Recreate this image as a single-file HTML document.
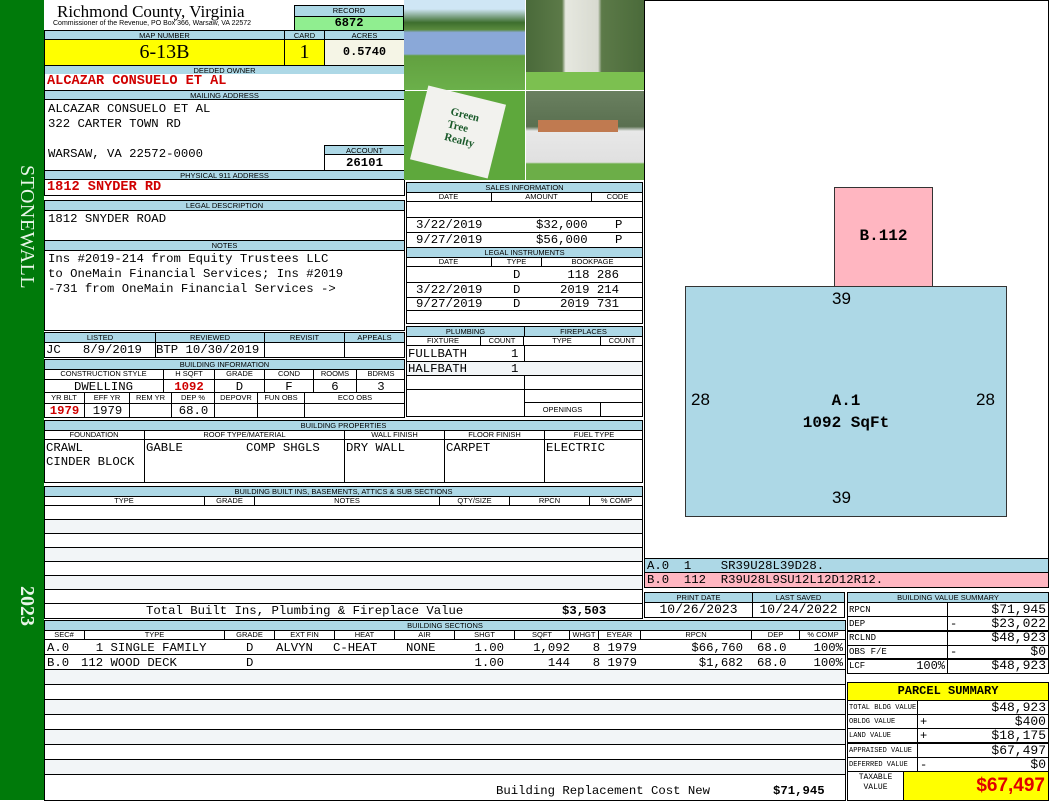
<!DOCTYPE html>
<html><head><meta charset="utf-8"><style>
*{margin:0;padding:0;box-sizing:border-box}
body{width:1050px;height:800px;position:relative;background:#fff;overflow:hidden;font-family:"Liberation Mono",monospace;font-size:12.3px;color:#000}
.a{position:absolute}
.h{position:absolute;background:#add8e6;border:1px solid #000;font:7.5px/9px "Liberation Sans",sans-serif;text-align:center;overflow:hidden;white-space:nowrap}
.b{position:absolute;border:1px solid #000;background:#fff;overflow:hidden;white-space:nowrap}
.m{font-family:"Liberation Mono",monospace;font-size:12.3px;line-height:14px}
.r{color:#d00000;font-weight:bold}
</style></head><body>
<div class="a" style="left:0;top:0;width:44px;height:800px;background:#007a0a"></div>
<div class="a" style="left:8px;top:165px;width:30px;height:160px;writing-mode:vertical-rl;font:20px 'Liberation Serif',serif;color:#e8f5e8;letter-spacing:0.5px">STONEWALL</div>
<div class="a" style="left:8px;top:586px;width:30px;height:45px;writing-mode:vertical-rl;font:bold 20px 'Liberation Serif',serif;color:#e8f5e8">2023</div>

<div class="a" style="left:57px;top:2px;font:17px/20px 'Liberation Serif',serif">Richmond County, Virginia</div>
<div class="a" style="left:53px;top:19px;font:7px/9px 'Liberation Sans',sans-serif">Commissioner of the Revenue, PO Box 366, Warsaw, VA 22572</div>
<div class="h" style="left:294px;top:5px;width:110px;height:12px;line-height:10px">RECORD</div>
<div class="b" style="left:294px;top:16px;width:110px;height:15px;background:#90ee90;text-align:center;font:bold 12px/13px 'Liberation Mono',monospace">6872</div>
<div class="h" style="left:44px;top:30px;width:241px;height:10px">MAP NUMBER</div>
<div class="h" style="left:284px;top:30px;width:41px;height:10px">CARD</div>
<div class="h" style="left:324px;top:30px;width:81px;height:10px">ACRES</div>
<div class="b" style="left:44px;top:39px;width:241px;height:27px;background:#ffff00;text-align:center;font:20px/25px 'Liberation Serif',serif">6-13B</div>
<div class="b" style="left:284px;top:39px;width:41px;height:27px;background:#ffff00;text-align:center;font:20px/25px 'Liberation Serif',serif">1</div>
<div class="b" style="left:324px;top:39px;width:81px;height:27px;background:#f5f5e6;text-align:center;font:bold 12px/25px 'Liberation Mono',monospace">0.5740</div>
<div class="h" style="left:44px;top:65px;width:361px;height:10px">DEEDED OWNER</div>
<div class="b m r" style="left:44px;top:74px;width:361px;height:17px;border-top:0;padding-left:2px;font-size:13.6px;line-height:16px">ALCAZAR CONSUELO ET AL</div>
<div class="h" style="left:44px;top:90px;width:361px;height:10px">MAILING ADDRESS</div>
<div class="b m" style="left:44px;top:99px;width:361px;height:72px;padding:2px 0 0 3px;line-height:15px">ALCAZAR CONSUELO ET AL<br>322 CARTER TOWN RD<br><br>WARSAW, VA 22572-0000</div>
<div class="h" style="left:324px;top:145px;width:81px;height:10px">ACCOUNT</div>
<div class="b m" style="left:324px;top:154px;width:81px;height:17px;text-align:center;font-weight:bold;line-height:16px">26101</div>
<div class="h" style="left:44px;top:170px;width:361px;height:10px">PHYSICAL 911 ADDRESS</div>
<div class="b m r" style="left:44px;top:179px;width:361px;height:17px;padding-left:2px;font-size:13.6px;line-height:16px">1812 SNYDER RD</div>

<div class="h" style="left:44px;top:200px;width:361px;height:11px">LEGAL DESCRIPTION</div>
<div class="b m" style="left:44px;top:210px;width:361px;height:31px;padding:1px 3px">1812 SNYDER ROAD</div>
<div class="h" style="left:44px;top:240px;width:361px;height:11px">NOTES</div>
<div class="b m" style="left:44px;top:250px;width:361px;height:81px;padding:1px 3px;line-height:15px">Ins #2019-214 from Equity Trustees LLC<br>to OneMain Financial Services; Ins #2019<br>-731 from OneMain Financial Services -&gt;</div>

<div class="h" style="left:44px;top:332px;width:112px;height:11px">LISTED</div>
<div class="h" style="left:155px;top:332px;width:110px;height:11px">REVIEWED</div>
<div class="h" style="left:264px;top:332px;width:81px;height:11px">REVISIT</div>
<div class="h" style="left:344px;top:332px;width:61px;height:11px">APPEALS</div>
<div class="b m" style="left:44px;top:342px;width:112px;height:16px;padding-left:1px">JC&nbsp;&nbsp;&nbsp;8/9/2019</div>
<div class="b m" style="left:155px;top:342px;width:110px;height:16px">BTP 10/30/2019</div>
<div class="b" style="left:264px;top:342px;width:81px;height:16px"></div>
<div class="b" style="left:344px;top:342px;width:61px;height:16px"></div>

<div class="h" style="left:44px;top:359px;width:361px;height:11px">BUILDING INFORMATION</div>
<div class="b" style="left:44px;top:369px;width:361px;height:49px"></div>
<div class="a" style="left:44px;top:369px;width:361px;font:7.5px/10px 'Liberation Sans',sans-serif">
<span class="a" style="left:0;width:120px;text-align:center;border-right:1px solid #000">CONSTRUCTION STYLE</span>
<span class="a" style="left:120px;width:51px;text-align:center;border-right:1px solid #000">H SQFT</span>
<span class="a" style="left:171px;width:50px;text-align:center;border-right:1px solid #000">GRADE</span>
<span class="a" style="left:221px;width:49px;text-align:center;border-right:1px solid #000">COND</span>
<span class="a" style="left:270px;width:43px;text-align:center;border-right:1px solid #000">ROOMS</span>
<span class="a" style="left:313px;width:48px;text-align:center">BDRMS</span></div>
<div class="a m" style="left:44px;top:379px;width:361px;height:14px;border-top:1px solid #000;border-bottom:1px solid #000">
<span class="a" style="left:0;width:120px;height:13px;text-align:center;border-right:1px solid #000">DWELLING</span>
<span class="a r" style="left:120px;width:51px;height:13px;text-align:center;border-right:1px solid #000">1092</span>
<span class="a" style="left:171px;width:50px;height:13px;text-align:center;border-right:1px solid #000">D</span>
<span class="a" style="left:221px;width:49px;height:13px;text-align:center;border-right:1px solid #000">F</span>
<span class="a" style="left:270px;width:43px;height:13px;text-align:center;border-right:1px solid #000">6</span>
<span class="a" style="left:313px;width:48px;text-align:center">3</span></div>
<div class="a" style="left:44px;top:393px;width:361px;font:7.5px/10px 'Liberation Sans',sans-serif">
<span class="a" style="left:0;width:41px;height:25px;text-align:center;border-right:1px solid #000">YR BLT</span>
<span class="a" style="left:41px;width:45px;height:25px;text-align:center;border-right:1px solid #000">EFF YR</span>
<span class="a" style="left:86px;width:42px;height:25px;text-align:center;border-right:1px solid #000">REM YR</span>
<span class="a" style="left:128px;width:43px;height:25px;text-align:center;border-right:1px solid #000">DEP %</span>
<span class="a" style="left:171px;width:43px;height:25px;text-align:center;border-right:1px solid #000">DEPOVR</span>
<span class="a" style="left:214px;width:47px;height:25px;text-align:center;border-right:1px solid #000">FUN OBS</span>
<span class="a" style="left:261px;width:100px;text-align:center">ECO OBS</span></div>
<div class="a m" style="left:44px;top:403px;width:361px;border-top:1px solid #000">
<span class="a r" style="left:0;width:41px;text-align:center">1979</span>
<span class="a" style="left:41px;width:45px;text-align:center">1979</span>
<span class="a" style="left:128px;width:43px;text-align:center">68.0</span></div>

<div class="a" style="left:404px;top:0;width:121px;height:90px;background:linear-gradient(#cfe6f5 0,#cfe6f5 10%,#3d6e2e 25%,#5a8a3e 33%,#8aa8d8 36%,#8aa8d8 60%,#62a040 62%,#6bb04a 100%)"></div>
<div class="a" style="left:526px;top:0;width:120px;height:90px;background:linear-gradient(90deg,#4a6a3a 0,#5c7a48 30%,#e6e8e0 33%,#d8dad0 60%,#5c7a48 63%,#4a6a3a 100%)"></div>
<div class="a" style="left:526px;top:72px;width:120px;height:18px;background:#7cc050"></div>
<div class="a" style="left:404px;top:91px;width:121px;height:89px;background:#5ea83c"></div>
<div class="a" style="left:418px;top:94px;width:80px;height:76px;background:#f2f2ee;transform:rotate(14deg);color:#1a5a2a;font:bold 11px/13px 'Liberation Serif',serif;padding:14px 0 0 28px">Green<br>Tree<br>Realty</div>
<div class="a" style="left:526px;top:91px;width:120px;height:89px;background:linear-gradient(#6a8060 0,#5a7050 40%,#e8e8e8 45%,#e0e0e0 80%,#6cae48 82%,#6cae48 100%)"></div>
<div class="a" style="left:538px;top:120px;width:80px;height:12px;background:#c07a50"></div>

<div class="h" style="left:406px;top:182px;width:237px;height:11px">SALES INFORMATION</div>
<div class="b" style="left:406px;top:192px;width:237px;height:56px"></div>
<div class="a" style="left:406px;top:192px;width:237px;height:10px;border-bottom:1px solid #000;font:7.5px/10px 'Liberation Sans',sans-serif">
<span class="a" style="left:0;width:86px;height:10px;text-align:center;border-right:1px solid #000">DATE</span>
<span class="a" style="left:86px;width:100px;height:10px;text-align:center;border-right:1px solid #000">AMOUNT</span>
<span class="a" style="left:186px;width:51px;text-align:center">CODE</span></div>
<div class="a" style="left:407px;top:217px;width:235px;height:1px;background:#000"></div>
<div class="a" style="left:407px;top:232px;width:235px;height:1px;background:#000"></div>
<div class="a m" style="left:416px;top:218px;line-height:15px">3/22/2019<br>9/27/2019</div>
<div class="a m" style="left:536px;top:218px;line-height:15px">$32,000<br>$56,000</div>
<div class="a m" style="left:615px;top:218px;line-height:15px">P<br>P</div>

<div class="h" style="left:406px;top:247px;width:237px;height:11px">LEGAL INSTRUMENTS</div>
<div class="b" style="left:406px;top:257px;width:237px;height:67px"></div>
<div class="a" style="left:406px;top:257px;width:237px;height:10px;border-bottom:1px solid #000;font:7.5px/10px 'Liberation Sans',sans-serif">
<span class="a" style="left:0;width:86px;height:10px;text-align:center;border-right:1px solid #000">DATE</span>
<span class="a" style="left:86px;width:50px;height:10px;text-align:center;border-right:1px solid #000">TYPE</span>
<span class="a" style="left:136px;width:101px;text-align:center">BOOKPAGE</span></div>
<div class="a" style="left:407px;top:282px;width:235px;height:1px;background:#000"></div>
<div class="a" style="left:407px;top:297px;width:235px;height:1px;background:#000"></div>
<div class="a" style="left:407px;top:310px;width:235px;height:1px;background:#000"></div>
<div class="a m" style="left:416px;top:268px;line-height:14.5px"><br>3/22/2019<br>9/27/2019</div>
<div class="a m" style="left:513px;top:268px;line-height:14.5px">D<br>D<br>D</div>
<div class="a m" style="left:555px;top:268px;line-height:14.5px;text-align:right;width:64px">118 286<br>2019 214<br>2019 731</div>

<div class="h" style="left:406px;top:326px;width:119px;height:11px">PLUMBING</div>
<div class="h" style="left:524px;top:326px;width:119px;height:11px">FIREPLACES</div>
<div class="b" style="left:406px;top:336px;width:237px;height:81px"></div>
<div class="a" style="left:406px;top:336px;width:237px;height:10px;border-bottom:1px solid #000;font:7.5px/10px 'Liberation Sans',sans-serif">
<span class="a" style="left:0;width:75px;height:10px;text-align:center;border-right:1px solid #000">FIXTURE</span>
<span class="a" style="left:75px;width:43px;height:10px;text-align:center;border-right:1px solid #000">COUNT</span>
<span class="a" style="left:118px;width:77px;height:10px;text-align:center;border-right:1px solid #000">TYPE</span>
<span class="a" style="left:195px;width:42px;text-align:center">COUNT</span></div>
<div class="a" style="left:524px;top:346px;width:1px;height:70px;background:#000"></div>
<div class="a" style="left:407px;top:361px;width:235px;height:15px;background:#f2f5f7;border-top:1px solid #000;border-bottom:1px solid #000"></div>
<div class="a" style="left:407px;top:389px;width:235px;height:1px;background:#000"></div>
<div class="a" style="left:525px;top:402px;width:117px;height:1px;background:#000"></div>
<div class="a" style="left:600px;top:402px;width:1px;height:14px;background:#000"></div>
<div class="a" style="left:525px;top:403px;width:75px;text-align:center;font:7.5px/13px 'Liberation Sans',sans-serif">OPENINGS</div>
<div class="a m" style="left:408px;top:347px;line-height:14.5px">FULLBATH<br>HALFBATH</div>
<div class="a m" style="left:511px;top:347px;line-height:14.5px">1<br>1</div>

<div class="h" style="left:44px;top:420px;width:599px;height:11px">BUILDING PROPERTIES</div>
<div class="b" style="left:44px;top:430px;width:599px;height:53px"></div>
<div class="a" style="left:44px;top:430px;width:599px;height:10px;border-bottom:1px solid #000;font:7.5px/10px 'Liberation Sans',sans-serif">
<span class="a" style="left:0;width:101px;height:53px;text-align:center;border-right:1px solid #000">FOUNDATION</span>
<span class="a" style="left:101px;width:200px;height:53px;text-align:center;border-right:1px solid #000">ROOF TYPE/MATERIAL</span>
<span class="a" style="left:301px;width:100px;height:53px;text-align:center;border-right:1px solid #000">WALL FINISH</span>
<span class="a" style="left:401px;width:100px;height:53px;text-align:center;border-right:1px solid #000">FLOOR FINISH</span>
<span class="a" style="left:501px;width:98px;text-align:center">FUEL TYPE</span></div>
<div class="a m" style="left:46px;top:441px;line-height:14px">CRAWL<br>CINDER BLOCK</div>
<div class="a m" style="left:146px;top:441px">GABLE</div>
<div class="a m" style="left:246px;top:441px">COMP SHGLS</div>
<div class="a m" style="left:346px;top:441px">DRY WALL</div>
<div class="a m" style="left:446px;top:441px">CARPET</div>
<div class="a m" style="left:546px;top:441px">ELECTRIC</div>

<div class="h" style="left:44px;top:486px;width:599px;height:11px">BUILDING BUILT INS, BASEMENTS, ATTICS &amp; SUB SECTIONS</div>
<div class="b" style="left:44px;top:496px;width:599px;height:123px"></div>
<div class="a" style="left:44px;top:496px;width:599px;height:10px;border-bottom:1px solid #000;font:7.5px/10px 'Liberation Sans',sans-serif">
<span class="a" style="left:0;width:161px;height:10px;text-align:center;border-right:1px solid #000">TYPE</span>
<span class="a" style="left:161px;width:50px;height:10px;text-align:center;border-right:1px solid #000">GRADE</span>
<span class="a" style="left:211px;width:185px;height:10px;text-align:center;border-right:1px solid #000">NOTES</span>
<span class="a" style="left:396px;width:70px;height:10px;text-align:center;border-right:1px solid #000">QTY/SIZE</span>
<span class="a" style="left:466px;width:80px;height:10px;text-align:center;border-right:1px solid #000">RPCN</span>
<span class="a" style="left:546px;width:53px;text-align:center">% COMP</span></div>
<div class="a" style="left:45px;top:506px;width:597px;height:98px;background:repeating-linear-gradient(#fff 0,#fff 13px,#000 13px,#000 14px,#f2f5f7 14px,#f2f5f7 27px,#000 27px,#000 28px)"></div>
<div class="a" style="left:45px;top:603px;width:597px;height:1px;background:#000"></div>
<div class="a m" style="left:146px;top:604px">Total Built Ins, Plumbing &amp; Fireplace Value</div>
<div class="a m" style="left:562px;top:604px;font-weight:bold">$3,503</div>

<div class="b" style="left:644px;top:0;width:405px;height:559px"></div>
<div class="a" style="left:834px;top:187px;width:99px;height:100px;background:#ffb6c1;border:1px solid #333;text-align:center;font:bold 16px/96px 'Liberation Mono',monospace">B.112</div>
<div class="a" style="left:685px;top:286px;width:322px;height:231px;background:#add8e6;border:1.5px solid #333"></div>
<div class="a" style="left:832px;top:289px;font:17px 'Liberation Sans',sans-serif">39</div>
<div class="a" style="left:832px;top:488px;font:17px 'Liberation Sans',sans-serif">39</div>
<div class="a" style="left:691px;top:390px;font:17px 'Liberation Sans',sans-serif">28</div>
<div class="a" style="left:976px;top:390px;font:17px 'Liberation Sans',sans-serif">28</div>
<div class="a" style="left:685px;top:390px;width:322px;text-align:center;font:bold 16px/22px 'Liberation Mono',monospace">A.1<br>1092 SqFt</div>

<div class="a m" style="left:644px;top:558px;width:405px;height:15px;background:#add8e6;border:1px solid #000;padding-left:2px;white-space:pre">A.0  1    SR39U28L39D28.</div>
<div class="a m" style="left:644px;top:572px;width:405px;height:16px;background:#ffb6c1;border:1px solid #000;padding-left:2px;white-space:pre">B.0  112  R39U28L9SU12L12D12R12.</div>

<div class="h" style="left:644px;top:592px;width:109px;height:11px">PRINT DATE</div>
<div class="h" style="left:752px;top:592px;width:93px;height:11px">LAST SAVED</div>
<div class="b m" style="left:644px;top:602px;width:109px;height:16px;text-align:center;font-size:13px">10/26/2023</div>
<div class="b m" style="left:752px;top:602px;width:93px;height:16px;text-align:center;font-size:13px">10/24/2022</div>

<div class="h" style="left:44px;top:620px;width:802px;height:11px">BUILDING SECTIONS</div>
<div class="b" style="left:44px;top:630px;width:802px;height:171px"></div>
<div class="a" style="left:44px;top:630px;width:802px;height:10px;border-bottom:1px solid #000;font:7.5px/10px 'Liberation Sans',sans-serif">
<span class="a" style="left:0;width:41px;height:10px;text-align:center;border-right:1px solid #000">SEC#</span>
<span class="a" style="left:41px;width:140px;height:10px;text-align:center;border-right:1px solid #000">TYPE</span>
<span class="a" style="left:181px;width:50px;height:10px;text-align:center;border-right:1px solid #000">GRADE</span>
<span class="a" style="left:231px;width:60px;height:10px;text-align:center;border-right:1px solid #000">EXT FIN</span>
<span class="a" style="left:291px;width:60px;height:10px;text-align:center;border-right:1px solid #000">HEAT</span>
<span class="a" style="left:351px;width:60px;height:10px;text-align:center;border-right:1px solid #000">AIR</span>
<span class="a" style="left:411px;width:60px;height:10px;text-align:center;border-right:1px solid #000">SHGT</span>
<span class="a" style="left:471px;width:55px;height:10px;text-align:center;border-right:1px solid #000">SQFT</span>
<span class="a" style="left:526px;width:29px;height:10px;text-align:center;border-right:1px solid #000">WHGT</span>
<span class="a" style="left:555px;width:42px;height:10px;text-align:center;border-right:1px solid #000">EYEAR</span>
<span class="a" style="left:597px;width:111px;height:10px;text-align:center;border-right:1px solid #000">RPCN</span>
<span class="a" style="left:708px;width:48px;height:10px;text-align:center;border-right:1px solid #000">DEP</span>
<span class="a" style="left:756px;width:46px;text-align:center">% COMP</span></div>
<div class="a" style="left:45px;top:640px;width:800px;height:145px;background:repeating-linear-gradient(#fff 0,#fff 14px,#000 14px,#000 15px)"></div>
<div class="a" style="left:45px;top:670px;width:800px;height:14px;background:#f2f5f7"></div>
<div class="a" style="left:45px;top:700px;width:800px;height:14px;background:#f2f5f7"></div>
<div class="a" style="left:45px;top:730px;width:800px;height:14px;background:#f2f5f7"></div>
<div class="a" style="left:45px;top:760px;width:800px;height:14px;background:#f2f5f7"></div>
<div class="a m" style="left:47px;top:641px;line-height:15px">A.0<br>B.0</div>
<div class="a m" style="left:81px;top:641px;line-height:15px;white-space:pre">  1 SINGLE FAMILY
112 WOOD DECK</div>
<div class="a m" style="left:246px;top:641px;line-height:15px">D<br>D</div>
<div class="a m" style="left:276px;top:641px;line-height:15px">ALVYN</div>
<div class="a m" style="left:333px;top:641px;line-height:15px">C-HEAT</div>
<div class="a m" style="left:406px;top:641px;line-height:15px">NONE</div>
<div class="a m" style="left:440px;top:641px;width:64px;text-align:right;line-height:15px">1.00<br>1.00</div>
<div class="a m" style="left:505px;top:641px;width:65px;text-align:right;line-height:15px">1,092<br>144</div>
<div class="a m" style="left:570px;top:641px;width:67px;text-align:right;line-height:15px">8 1979<br>8 1979</div>
<div class="a m" style="left:640px;top:641px;width:103px;text-align:right;line-height:15px">$66,760<br>$1,682</div>
<div class="a m" style="left:757px;top:641px;line-height:15px">68.0<br>68.0</div>
<div class="a m" style="left:800px;top:641px;width:43px;text-align:right;line-height:15px">100%<br>100%</div>
<div class="a m" style="left:496px;top:784px;white-space:pre">Building Replacement Cost New</div>
<div class="a m" style="left:773px;top:784px;font-weight:bold">$71,945</div>

<div class="h" style="left:847px;top:592px;width:202px;height:11px">BUILDING VALUE SUMMARY</div>
<div class="b" style="left:847px;top:602px;width:202px;height:72px"></div>
<div class="a" style="left:947px;top:602px;width:1px;height:72px;background:#000"></div>
<div class="a" style="left:848px;top:616px;width:200px;height:1px;background:#000"></div>
<div class="a" style="left:848px;top:630px;width:200px;height:2px;background:#000"></div>
<div class="a" style="left:848px;top:645px;width:200px;height:1px;background:#000"></div>
<div class="a" style="left:848px;top:658px;width:200px;height:2px;background:#000"></div>
<div class="a" style="left:849px;top:603px;font:9px/14px 'Liberation Mono',monospace">RPCN<br>DEP<br>RCLND<br>OBS F/E<br>LCF</div>
<div class="a" style="left:895px;top:659px;width:50px;text-align:right;font:12px/14px 'Liberation Mono',monospace">100%</div>
<div class="a" style="left:950px;top:603px;font:12px/14px 'Liberation Mono',monospace"><br>-<br><br>-</div>
<div class="a" style="left:950px;top:603px;width:96px;text-align:right;font:13px/14px 'Liberation Mono',monospace">$71,945<br>$23,022<br>$48,923<br>$0<br>$48,923</div>

<div class="a" style="left:847px;top:682px;width:202px;height:19px;background:#ffff00;border:1px solid #000;text-align:center;font:bold 12px/17px 'Liberation Mono',monospace">PARCEL SUMMARY</div>
<div class="b" style="left:847px;top:700px;width:202px;height:101px"></div>
<div class="a" style="left:917px;top:700px;width:1px;height:72px;background:#000"></div>
<div class="a" style="left:848px;top:714px;width:200px;height:1px;background:#000"></div>
<div class="a" style="left:848px;top:728px;width:200px;height:1px;background:#000"></div>
<div class="a" style="left:848px;top:742px;width:200px;height:2px;background:#000"></div>
<div class="a" style="left:848px;top:757px;width:200px;height:1px;background:#000"></div>
<div class="a" style="left:848px;top:771px;width:200px;height:1px;background:#000"></div>
<div class="a" style="left:849px;top:701px;font:7px/14.2px 'Liberation Mono',monospace">TOTAL BLDG VALUE<br>OBLDG VALUE<br>LAND VALUE<br>APPRAISED VALUE<br>DEFERRED VALUE</div>
<div class="a" style="left:920px;top:701px;font:12px/14.2px 'Liberation Mono',monospace"><br>+<br>+<br><br>-</div>
<div class="a" style="left:920px;top:701px;width:126px;text-align:right;font:13px/14.2px 'Liberation Mono',monospace">$48,923<br>$400<br>$18,175<br>$67,497<br>$0</div>
<div class="a" style="left:848px;top:773px;width:55px;text-align:center;font:8px/10px 'Liberation Mono',monospace">TAXABLE<br>VALUE</div>
<div class="a" style="left:903px;top:772px;width:145px;height:28px;background:#ffff00;border-left:1px solid #000;text-align:right;padding-right:3px;color:#e00000;font:bold 19px/27px 'Liberation Sans',sans-serif">$67,497</div>
</body></html>
